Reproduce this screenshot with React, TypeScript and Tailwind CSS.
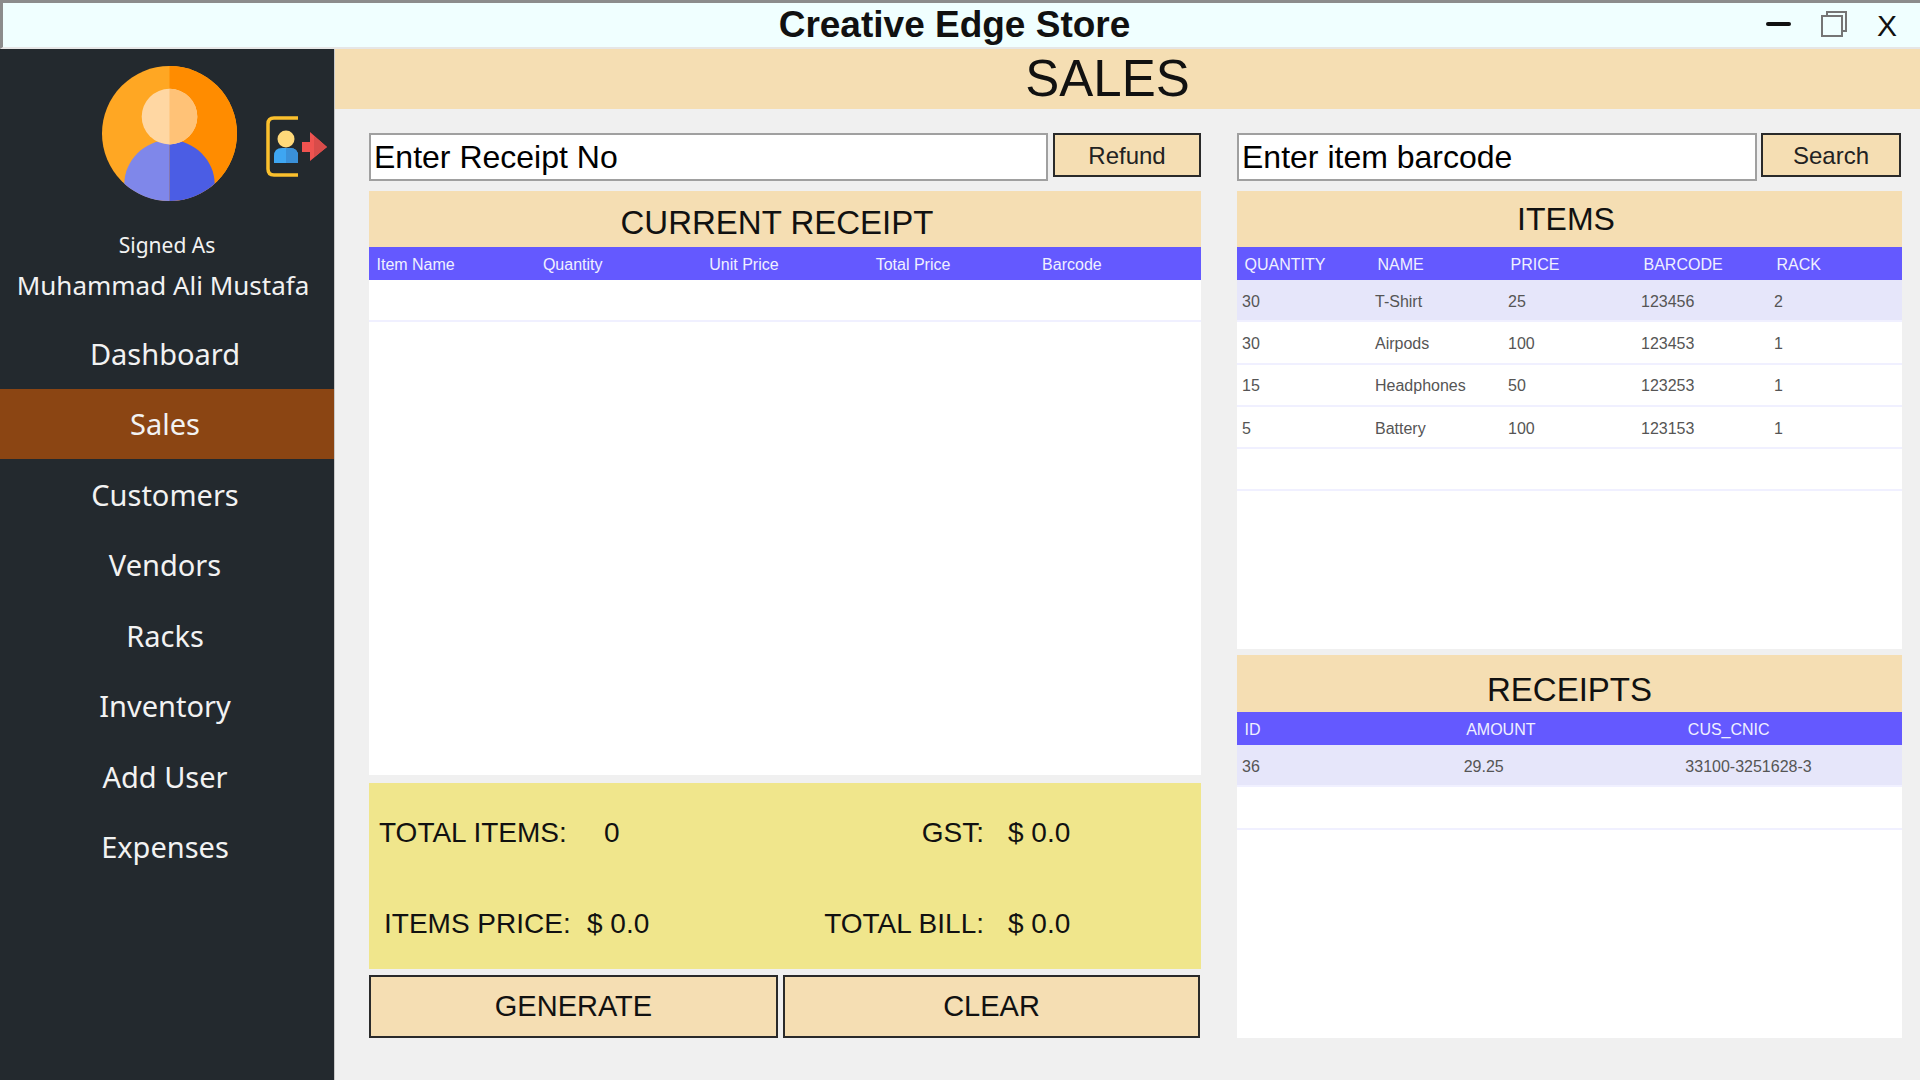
// App.tsx
// Creative Edge Store - Sales screen

const navItems = ['Dashboard', 'Sales', 'Customers', 'Vendors', 'Racks', 'Inventory', 'Add User', 'Expenses'];

const receiptColumns = ['Item Name', 'Quantity', 'Unit Price', 'Total Price', 'Barcode'];
const itemColumns = ['QUANTITY', 'NAME', 'PRICE', 'BARCODE', 'RACK'];
const receiptListColumns = ['ID', 'AMOUNT', 'CUS_CNIC'];

const items = [
  ['30', 'T-Shirt', '25', '123456', '2'],
  ['30', 'Airpods', '100', '123453', '1'],
  ['15', 'Headphones', '50', '123253', '1'],
  ['5', 'Battery', '100', '123153', '1'],
  ['', '', '', '', ''],
];

const receipts = [
  ['36', '29.25', '33100-3251628-3'],
  ['', '', ''],
];

function Avatar() {
  return (
    <svg width="135" height="135" viewBox="0 0 136 136" className="shrink-0">
      <circle cx="68" cy="68" r="68" fill="#ffa723" />
      <path d="M68 0a68 68 0 0 1 0 136z" fill="#ff8c00" />
      <path d="M22.5 118.5C22.500 96 42 74.500 68 74.500v61.500c-18 0-33-6.500-45.500-17.500z" fill="#7f87ea" />
      <path d="M113.500 118.500C113.500 96 94 74.500 68 74.500v61.500c18 0 33-6.500 45.500-17.500z" fill="#4b5de4" />
      <circle cx="68" cy="51" r="28" fill="#ffd7a3" />
      <path d="M68 23a28 28 0 0 1 0 56z" fill="#ffc277" />
    </svg>
  );
}

function LogoutIcon() {
  return (
    <svg width="61" height="61" viewBox="0 0 61 61" className="shrink-0">
      <path d="M32 2H8Q2 2 2 8V53Q2 59 8 59H32" fill="none" stroke="#fbc02d" strokeWidth="3.500" />
      <circle cx="20" cy="23" r="8.500" fill="#ffd97a" />
      <path d="M8 47V40Q8 32 16 32H24Q32 32 32 40V47z" fill="#3ea6f2" />
      <path d="M20 32H24Q32 32 32 40V47H20z" fill="#3a90d8" />
      <path d="M36 26H44V16L61 31 44 45V36H36z" fill="#ef5350" />
      <path d="M48 20L61 31 48 41z" fill="#d84c4a" />
    </svg>
  );
}

function TitleBar() {
  return (
    <div className="flex h-[49px] shrink-0 items-center border-t-[3px] border-l-[3px] border-b-2 border-t-[#8c8c8c] border-l-[#8c8c8c] border-b-[#e6e6e6] bg-[#f0ffff]">
      <div className="flex-1 pb-[2px] pl-[140px] text-center text-[37px] font-bold leading-none text-[#111]">Creative Edge Store</div>
      <div className="flex w-[154px] items-center pb-[2px]">
        <div className="h-[4px] w-[25px] rounded-full bg-[#111]" />
        <svg width="28" height="28" viewBox="0 0 28 28" className="ml-[29px]">
          <path d="M7 6V2H26V21H22" fill="none" stroke="#757575" strokeWidth="2" />
          <rect x="2" y="6" width="20" height="20" fill="none" stroke="#757575" strokeWidth="2" />
        </svg>
        <span className="ml-[29px] pt-[3px] text-[30px] leading-none text-[#111]">X</span>
      </div>
    </div>
  );
}

function Sidebar() {
  return (
    <aside className="flex w-[335px] shrink-0 flex-col border-r border-[#c8c8c8] bg-[#23292e] pt-[17px] font-['Noto_Sans',sans-serif] text-[#f2f2f2]">
      <div className="flex items-start pl-[102px]">
        <Avatar />
        <div className="ml-[29px] mt-[50px]">
          <LogoutIcon />
        </div>
      </div>
      <div className="mt-[30px] h-[28px] text-center text-[21px] leading-[28px]">Signed As</div>
      <div className="mt-[6px] h-[40px] pr-[8px] text-center text-[26px] leading-[40px]">Muhammad Ali Mustafa</div>
      <nav className="mt-[13px]">
        {navItems.map((item) => (
          <div
            key={item}
            className={`flex h-[70.500px] items-center justify-center pr-[4px] text-[29px] ${item === 'Sales' ? 'bg-[#8b4513]' : ''}`}
          >
            {item}
          </div>
        ))}
      </nav>
    </aside>
  );
}

function SearchRow({ value, button, inputWidth, buttonWidth }: { value: string; button: string; inputWidth: string; buttonWidth: string }) {
  return (
    <div className="flex h-12 items-start justify-between">
      <input
        readOnly
        defaultValue={value}
        className={`h-12 border-2 border-[#a0a0a0] bg-white px-[3px] text-[32px] text-black outline-none ${inputWidth}`}
      />
      <button className={`h-[44px] border-2 border-[#2a2a2a] bg-[#f5deb3] pt-[1px] text-[24px] text-[#222] ${buttonWidth}`}>{button}</button>
    </div>
  );
}

function TableHead({ columns, className }: { columns: string[]; className: string }) {
  return (
    <div className={`grid h-[33px] shrink-0 items-center bg-[#6459ff] pt-[3px] text-[16px] text-[#f0f0ff] ${className}`}>
      {columns.map((col) => (
        <div key={col} className="pl-[7.500px]">
          {col}
        </div>
      ))}
    </div>
  );
}

function TableRows({ rows, className }: { rows: string[][]; className: string }) {
  return (
    <div className="flex-1 bg-white text-[16px] text-[#555]">
      {rows.map((row, i) => (
        <div key={i} className={`grid h-[42.300px] items-center border-b-2 border-[#f0f0ff] pt-[3px] ${i === 0 && row[0] ? 'bg-[#e6e6fa]' : ''} ${className}`}>
          {row.map((cell, j) => (
            <div key={j} className="pl-[5px]">
              {cell}
            </div>
          ))}
        </div>
      ))}
    </div>
  );
}

function SummaryCell({ label, value, labelClass }: { label: string; value: string; labelClass: string }) {
  return (
    <div className="flex items-center whitespace-pre">
      <div className={labelClass}>{label}</div>
      <div>{value}</div>
    </div>
  );
}

export default function App() {
  return (
    <div className="flex h-screen w-screen flex-col overflow-hidden bg-[#f0f0f0] font-['Liberation_Sans',Arial,sans-serif]">
      <TitleBar />
      <div className="flex min-h-0 flex-1">
        <Sidebar />
        <main className="flex min-w-0 flex-1 flex-col">
          <div className="h-[60px] shrink-0 bg-[#f5deb3] pr-[40px] text-center text-[51px] leading-[60px] text-[#111]">SALES</div>

          <div className="flex pl-[34px] pt-6">
            {/* Left column: current receipt */}
            <section className="flex h-[905px] w-[832px] shrink-0 flex-col">
              <SearchRow value="Enter Receipt No" button="Refund" inputWidth="w-[679px]" buttonWidth="w-[148px]" />
              <div className="mt-[10px] h-14 shrink-0 bg-[#f5deb3] pr-[16px] pt-[12px] text-center text-[33px] leading-[40px] text-[#111]">CURRENT RECEIPT</div>
              <TableHead columns={receiptColumns} className="grid-cols-5" />
              <div className="flex h-[495px] shrink-0 flex-col">
                <TableRows rows={[['', '', '', '', '']]} className="grid-cols-5" />
              </div>

              <div className="mt-2 grid h-[186px] shrink-0 grid-cols-[453px_1fr] grid-rows-2 bg-[#f0e68c] text-[28px] text-[#111]">
                <div className="flex items-center pl-[10px] pt-[7px]">
                  <SummaryCell label="TOTAL ITEMS:" value="0" labelClass="w-[225px]" />
                </div>
                <div className="flex items-center pt-[7px]">
                  <SummaryCell label="GST:" value="$ 0.0" labelClass="mr-[24px] w-[162px] text-right" />
                </div>
                <div className="flex items-center pl-[15px] pt-[2px]">
                  <SummaryCell label="ITEMS PRICE:" value="$ 0.0" labelClass="w-[203px]" />
                </div>
                <div className="flex items-center pt-[2px]">
                  <SummaryCell label="TOTAL BILL:" value="$ 0.0" labelClass="mr-[24px] w-[162px] text-right" />
                </div>
              </div>

              <div className="mt-[6px] flex gap-[5px]">
                <button className="h-[63px] w-[409px] border-2 border-[#2a2a2a] bg-[#f5deb3] text-[29px] text-[#111]">GENERATE</button>
                <button className="h-[63px] w-[417px] border-2 border-[#2a2a2a] bg-[#f5deb3] text-[29px] text-[#111]">CLEAR</button>
              </div>
            </section>

            {/* Right column: items and receipts */}
            <section className="ml-9 flex h-[905px] w-[665px] shrink-0 flex-col">
              <SearchRow value="Enter item barcode" button="Search" inputWidth="w-[520px]" buttonWidth="w-[140px] mr-[1px]" />
              <div className="mt-[10px] h-14 shrink-0 bg-[#f5deb3] pr-[7px] pt-[8px] text-center text-[32px] leading-[40px] text-[#111]">ITEMS</div>
              <TableHead columns={itemColumns} className="grid-cols-5" />
              <div className="flex h-[369px] shrink-0 flex-col">
                <TableRows rows={items} className="grid-cols-5" />
              </div>

              <div className="mt-[6px] h-[57px] shrink-0 bg-[#f5deb3] pt-[15px] text-center text-[33px] leading-[40px] text-[#111]">RECEIPTS</div>
              <TableHead columns={receiptListColumns} className="grid-cols-3" />
              <div className="flex h-[293px] shrink-0 flex-col">
                <TableRows rows={receipts} className="grid-cols-3" />
              </div>
            </section>
          </div>
        </main>
      </div>
    </div>
  );
}
